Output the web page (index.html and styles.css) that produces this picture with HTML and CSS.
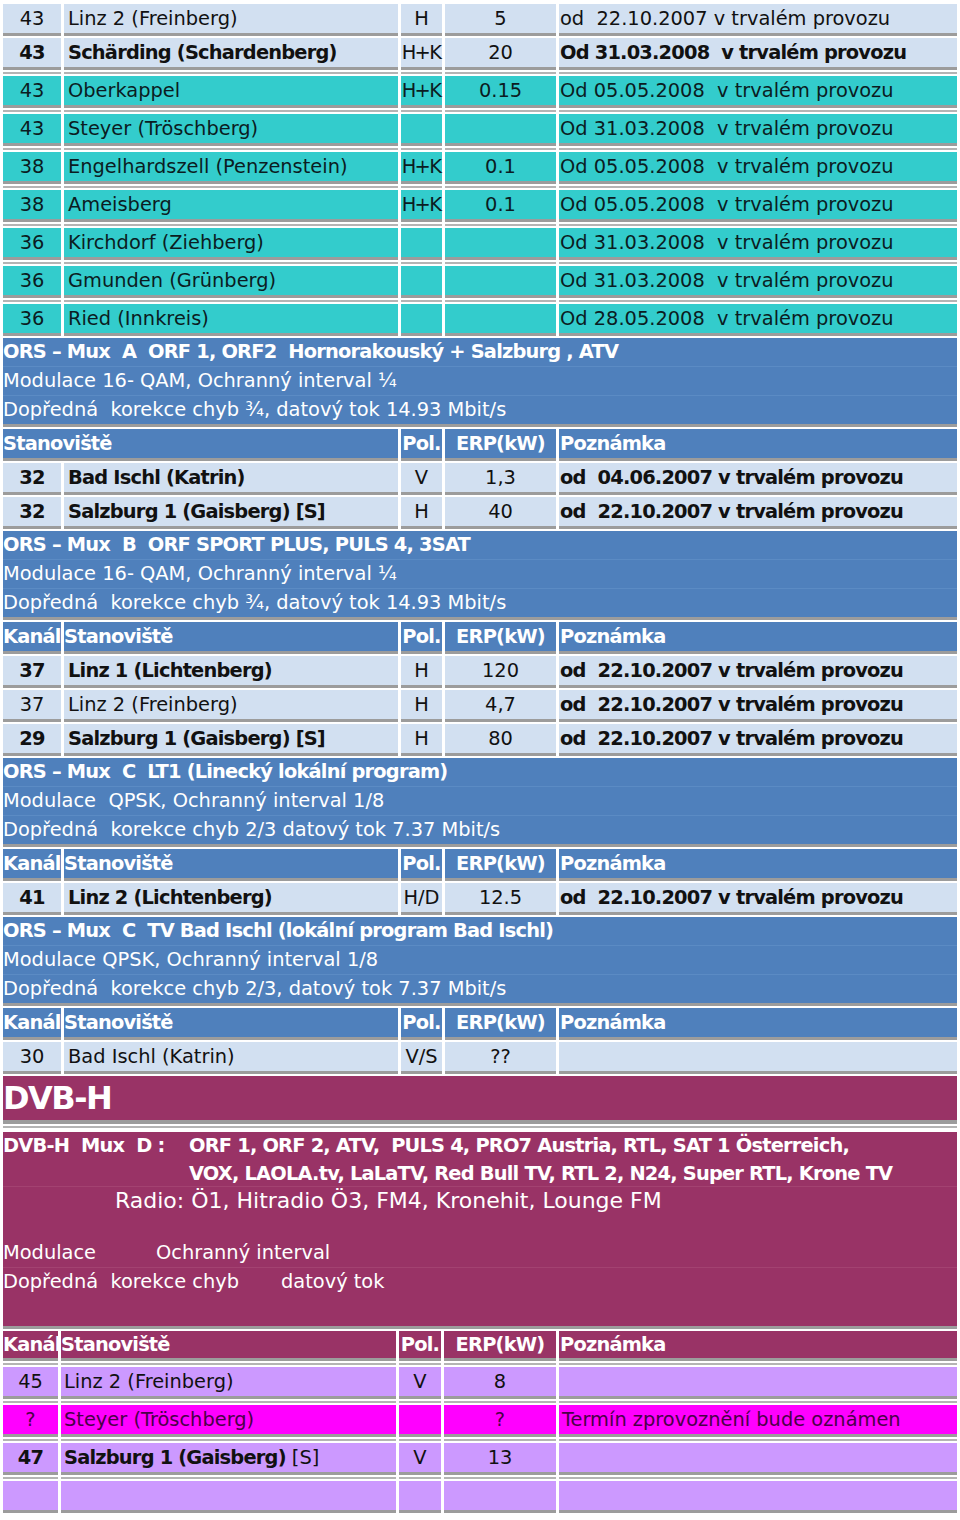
FILE: index.html
```html
<!DOCTYPE html>
<html lang="cs">
<head>
<meta charset="utf-8">
<title>DVB-T Horní Rakousko</title>
<link rel="stylesheet" href="styles.css">
</head>
<body>
<table class="grid">
<colgroup><col class="c1"><col class="c2"><col class="c3"><col class="c4"><col class="c5"></colgroup>
<tbody>
<tr class="lb"><td class="k">43</td><td class="n">Linz 2 (Freinberg)</td><td class="p">H</td><td class="e">5</td><td class="z">od&nbsp; 22.10.2007 v trvalém provozu</td></tr>
<tr class="lb"><td class="k b">43</td><td class="n b">Schärding (Schardenberg)</td><td class="p t">H+K</td><td class="e">20</td><td class="z b">Od 31.03.2008&nbsp; v trvalém provozu</td></tr>
<tr class="tl"><td class="k">43</td><td class="n">Oberkappel</td><td class="p t">H+K</td><td class="e">0.15</td><td class="z">Od 05.05.2008&nbsp; v trvalém provozu</td></tr>
<tr class="tl"><td class="k">43</td><td class="n">Steyer (Tröschberg)</td><td class="p"></td><td class="e"></td><td class="z">Od 31.03.2008&nbsp; v trvalém provozu</td></tr>
<tr class="tl"><td class="k">38</td><td class="n">Engelhardszell (Penzenstein)</td><td class="p t">H+K</td><td class="e">0.1</td><td class="z">Od 05.05.2008&nbsp; v trvalém provozu</td></tr>
<tr class="tl"><td class="k">38</td><td class="n">Ameisberg</td><td class="p t">H+K</td><td class="e">0.1</td><td class="z">Od 05.05.2008&nbsp; v trvalém provozu</td></tr>
<tr class="tl"><td class="k">36</td><td class="n">Kirchdorf (Ziehberg)</td><td class="p"></td><td class="e"></td><td class="z">Od 31.03.2008&nbsp; v trvalém provozu</td></tr>
<tr class="tl"><td class="k">36</td><td class="n">Gmunden (Grünberg)</td><td class="p"></td><td class="e"></td><td class="z">Od 31.03.2008&nbsp; v trvalém provozu</td></tr>
<tr class="tl"><td class="k">36</td><td class="n">Ried (Innkreis)</td><td class="p"></td><td class="e"></td><td class="z">Od 28.05.2008&nbsp; v trvalém provozu</td></tr>

<tr class="mux"><td colspan="5">
<div class="ml b">ORS – Mux&nbsp; A&nbsp; ORF 1, ORF2&nbsp; Hornorakouský + Salzburg , ATV</div>
<div class="ml">Modulace 16- QAM, Ochranný interval ¼</div>
<div class="ml">Dopředná&nbsp; korekce chyb ¾, datový tok 14.93 Mbit/s</div>
</td></tr>
<tr class="hd"><td colspan="2" class="h">Stanoviště</td><td class="h hc">Pol.</td><td class="h hc">ERP(kW)</td><td class="h">Poznámka</td></tr>
<tr class="lb"><td class="k b">32</td><td class="n b">Bad Ischl (Katrin)</td><td class="p">V</td><td class="e">1,3</td><td class="z b">od&nbsp; 04.06.2007 v trvalém provozu</td></tr>
<tr class="lb"><td class="k b">32</td><td class="n b">Salzburg 1 (Gaisberg) [S]</td><td class="p">H</td><td class="e">40</td><td class="z b">od&nbsp; 22.10.2007 v trvalém provozu</td></tr>

<tr class="mux"><td colspan="5">
<div class="ml b">ORS – Mux&nbsp; B&nbsp; ORF SPORT PLUS, PULS 4, 3SAT</div>
<div class="ml">Modulace 16- QAM, Ochranný interval ¼</div>
<div class="ml">Dopředná&nbsp; korekce chyb ¾, datový tok 14.93 Mbit/s</div>
</td></tr>
<tr class="hd"><td class="h">Kanál</td><td class="h">Stanoviště</td><td class="h hc">Pol.</td><td class="h hc">ERP(kW)</td><td class="h">Poznámka</td></tr>
<tr class="lb"><td class="k b">37</td><td class="n b">Linz 1 (Lichtenberg)</td><td class="p">H</td><td class="e">120</td><td class="z b">od&nbsp; 22.10.2007 v trvalém provozu</td></tr>
<tr class="lb"><td class="k">37</td><td class="n">Linz 2 (Freinberg)</td><td class="p">H</td><td class="e">4,7</td><td class="z b">od&nbsp; 22.10.2007 v trvalém provozu</td></tr>
<tr class="lb"><td class="k b">29</td><td class="n b">Salzburg 1 (Gaisberg) [S]</td><td class="p">H</td><td class="e">80</td><td class="z b">od&nbsp; 22.10.2007 v trvalém provozu</td></tr>

<tr class="mux"><td colspan="5">
<div class="ml b">ORS – Mux&nbsp; C&nbsp; LT1 (Linecký lokální program)</div>
<div class="ml">Modulace&nbsp; QPSK, Ochranný interval 1/8</div>
<div class="ml">Dopředná&nbsp; korekce chyb 2/3 datový tok 7.37 Mbit/s</div>
</td></tr>
<tr class="hd"><td class="h">Kanál</td><td class="h">Stanoviště</td><td class="h hc">Pol.</td><td class="h hc">ERP(kW)</td><td class="h">Poznámka</td></tr>
<tr class="lb"><td class="k b">41</td><td class="n b">Linz 2 (Lichtenberg)</td><td class="p">H/D</td><td class="e">12.5</td><td class="z b">od&nbsp; 22.10.2007 v trvalém provozu</td></tr>

<tr class="mux"><td colspan="5">
<div class="ml b">ORS – Mux&nbsp; C&nbsp; TV Bad Ischl (lokální program Bad Ischl)</div>
<div class="ml">Modulace QPSK, Ochranný interval 1/8</div>
<div class="ml">Dopředná&nbsp; korekce chyb 2/3, datový tok 7.37 Mbit/s</div>
</td></tr>
<tr class="hd"><td class="h">Kanál</td><td class="h">Stanoviště</td><td class="h hc">Pol.</td><td class="h hc">ERP(kW)</td><td class="h">Poznámka</td></tr>
<tr class="lb"><td class="k">30</td><td class="n">Bad Ischl (Katrin)</td><td class="p">V/S</td><td class="e">??</td><td class="z"></td></tr>
</tbody>
</table>

<table class="grid dvbh">
<colgroup><col class="d1"><col class="d2"><col class="d3"><col class="d4"><col class="d5"></colgroup>
<tbody>
<tr class="title"><td colspan="5">DVB-H</td></tr>
<tr class="pblock"><td colspan="5">
<div class="pl pl-mux">
<div class="mlabel b">DVB-H&nbsp; Mux&nbsp; D :</div>
<div class="mlist b">ORF 1, ORF 2, ATV,&nbsp; PULS 4, PRO7 Austria, RTL, SAT 1 Österreich,<br>VOX, LAOLA.tv, LaLaTV, Red Bull TV, RTL 2, N24, Super RTL, Krone TV</div>
</div>
<div class="pl pl-radio">Radio: Ö1, Hitradio Ö3, FM4, Kronehit, Lounge FM</div>
<div class="pl pl-mod"><span class="w1">Modulace</span><span>Ochranný interval</span></div>
<div class="pl pl-fec"><span class="w2">Dopředná&nbsp; korekce chyb</span><span>datový tok</span></div>
<div class="pl pl-end"></div>
</td></tr>
<tr class="phd"><td class="h">Kanál</td><td class="h">Stanoviště</td><td class="h hc">Pol.</td><td class="h hc">ERP(kW)</td><td class="h">Poznámka</td></tr>
<tr class="lv"><td class="k">45</td><td class="n">Linz 2 (Freinberg)</td><td class="p">V</td><td class="e">8</td><td class="z"></td></tr>
<tr class="mg"><td class="k">?</td><td class="n">Steyer (Tröschberg)</td><td class="p"></td><td class="e">?</td><td class="z">Termín zprovoznění bude oznámen</td></tr>
<tr class="lv"><td class="k b">47</td><td class="n"><span class="b">Salzburg 1 (Gaisberg)</span> [S]</td><td class="p">V</td><td class="e">13</td><td class="z"></td></tr>
<tr class="lv"><td class="k"></td><td class="n"></td><td class="p"></td><td class="e"></td><td class="z"></td></tr>
</tbody>
</table>
</body>
</html>
```

FILE: styles.css
```css
html, body {
  margin: 0;
  padding: 0;
  background: #ffffff;
}

body {
  font-family: "DejaVu Sans", "Liberation Sans", sans-serif;
  font-size: 19.4px;
  color: #111111;
  padding-top: 2px;
}

.grid {
  border-collapse: separate;
  border-spacing: 3px 2px;
  table-layout: fixed;
  width: 960px;
  margin: 0;
}

.grid + .grid {
  margin-top: -2px;
}

.c1 { width: 58px; }
.c2 { width: 334px; }
.c3 { width: 41px; }
.c4 { width: 111px; }
.c5 { width: auto; }

.d1 { width: 55px; }
.d2 { width: 335px; }
.d3 { width: 42px; }
.d4 { width: 112px; }
.d5 { width: auto; }

td {
  padding: 0;
  height: 29px;
  line-height: 29px;
  white-space: nowrap;
  vertical-align: middle;
  border-bottom: 3px solid #9c9c9c;
}

.b {
  font-weight: bold;
  letter-spacing: -0.8px;
}

.k, .p, .e, .hc { text-align: center; }
.t { letter-spacing: -1.6px; text-indent: -1px; }
.n { padding-left: 4px; }
.z { padding-left: 1px; }

/* light blue rows */
.lb td { background: #d2e0f1; }

/* teal rows */
.tl td {
  background: #33cccc;
  border-top: 2px solid #b4b4b4;
  box-shadow: inset 0 2px 0 #ffffff;
  padding-top: 2px;
  color: #0b1c22;
}

/* blue mux info blocks */
.mux td {
  background: #4f80bc;
  color: #ffffff;
  height: auto;
  line-height: normal;
}

.ml {
  height: 28px;
  line-height: 28px;
  border-bottom: 1px solid #5b8bc4;
}

.ml:last-child { border-bottom: 0; }

/* header rows */
.hd td {
  background: #4f80bc;
  color: #ffffff;
}

.h {
  font-weight: bold;
  letter-spacing: -0.8px;
}

.hd td:last-child, .phd td:last-child { padding-left: 1px; }

/* DVB-H section */
.dvbh td { color: #ffffff; }

.title td {
  background: #993366;
  height: 44px;
  line-height: 44px;
  font-size: 32px;
  font-weight: bold;
  letter-spacing: -1.5px;
  border-bottom-width: 4px;
}

.pblock td {
  background: #993366;
  border-top: 2px solid #b4b4b4;
  box-shadow: inset 0 4px 0 #ffffff;
  padding-top: 4px;
  height: auto;
  line-height: normal;
}

.pl {
  border-bottom: 1px solid #a34271;
}

.pl-mux {
  display: flex;
  line-height: 28px;
  height: 54px;
}

.mlabel { width: 186px; flex: none; }

.pl-radio {
  font-size: 22px;
  height: 52px;
  line-height: 28px;
  padding-left: 112px;
  border-bottom: 0;
}

.pl-mod {
  height: 28px;
  line-height: 28px;
}

.pl-fec {
  height: 28px;
  line-height: 28px;
  border-bottom: 0;
}

.pl-end { height: 30px; border-bottom: 0; }

.w1 { display: inline-block; width: 153px; }
.w2 { display: inline-block; width: 278px; }

.phd td {
  background: #993366;
  color: #ffffff;
  height: 27px;
  line-height: 27px;
}

.lv td, .mg td {
  background: #cc99ff;
  color: #111111;
  border-top: 2px solid #b4b4b4;
  box-shadow: inset 0 2px 0 #ffffff;
  padding-top: 2px;
  height: 29px;
  line-height: 29px;
}

.lv .n, .mg .n { padding-left: 3px; }

.mg td {
  background: #ff00ff;
  color: #4a0048;
}

.dvbh .z { padding-left: 3px; }
```
